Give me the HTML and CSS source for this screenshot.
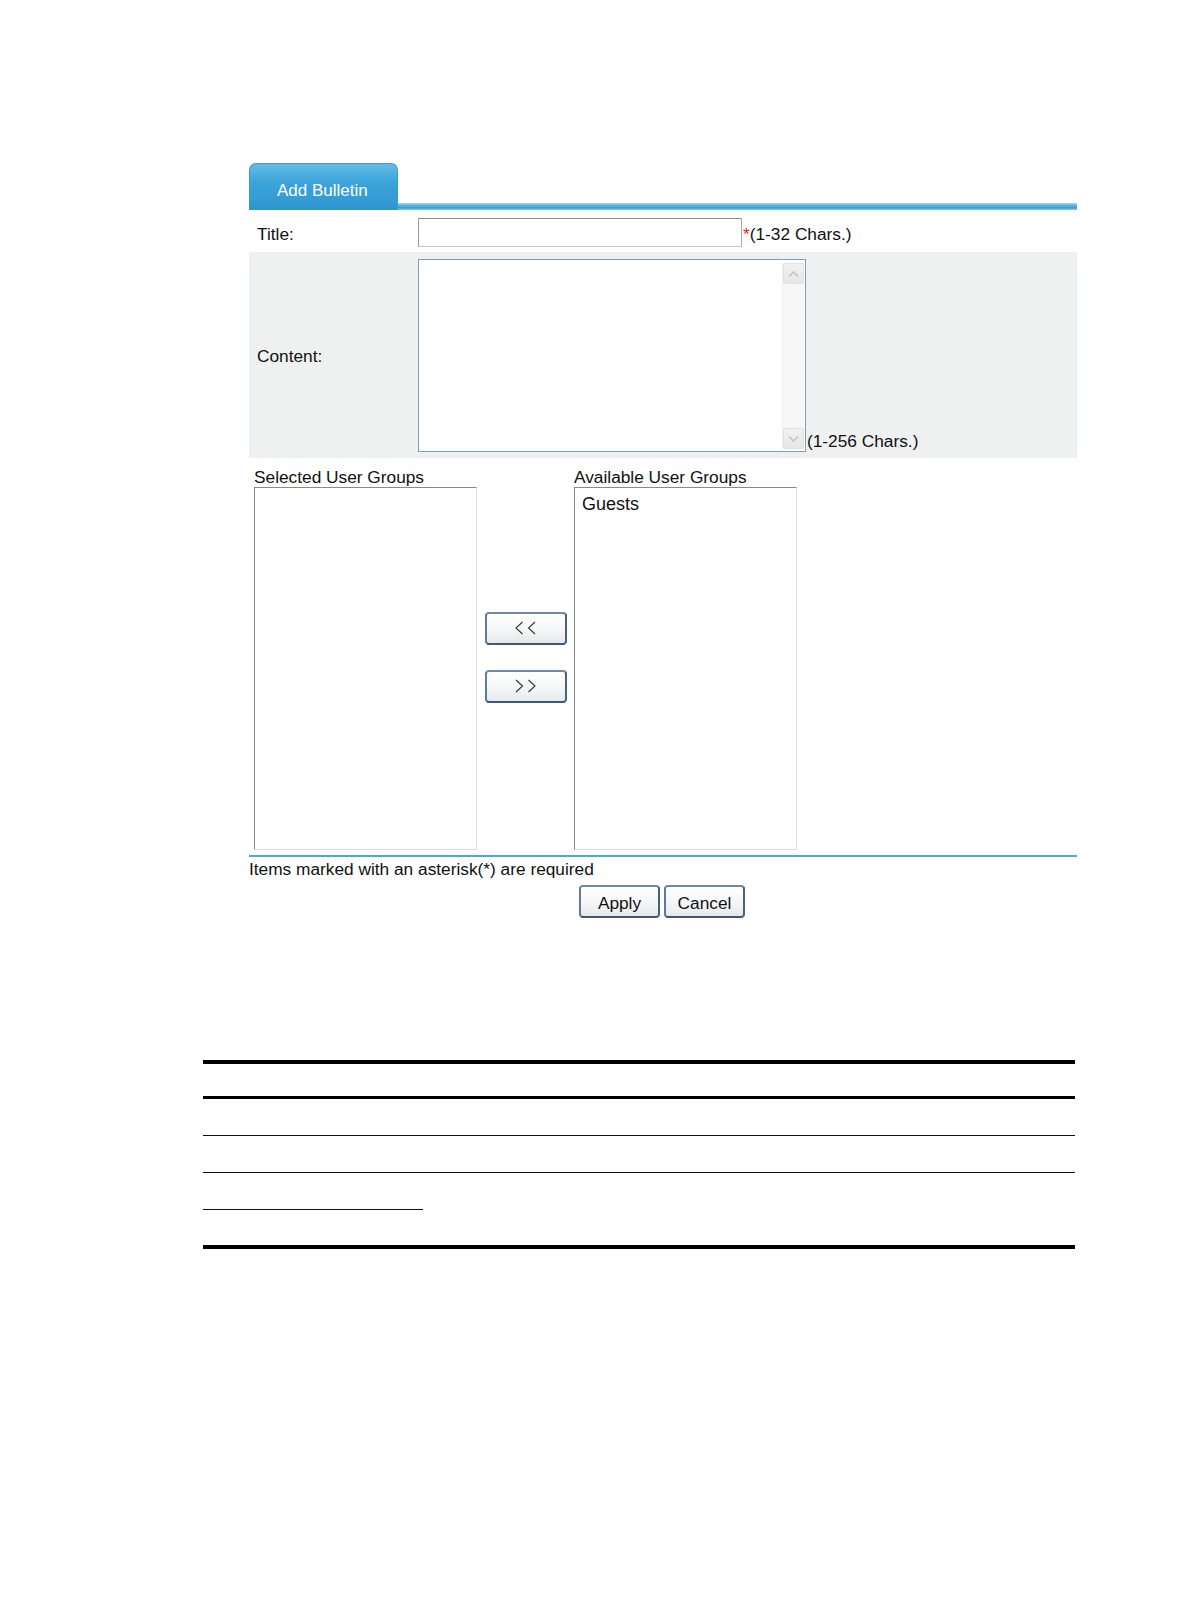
FILE: index.html
```html
<!DOCTYPE html>
<html>
<head>
<meta charset="utf-8">
<title>Add Bulletin</title>
<link rel="stylesheet" href="styles.css">
</head>
<body>
<div class="page">
  <div class="form">
    <div class="tabrow">
      <div class="tab">Add Bulletin</div>
      <div class="tabline"></div>
    </div>
    <div class="row row-title">
      <div class="label">Title:</div>
      <div class="input"></div>
      <span class="req">*</span><span class="note">(1-32 Chars.)</span>
    </div>
    <div class="row row-content">
      <div class="label">Content:</div>
      <div class="textbox">
        <div class="scrollbar">
          <div class="sb-btn">
            <svg width="13" height="8" viewBox="0 0 13 8"><polyline points="2,6.5 6.5,2 11,6.5" fill="none" stroke="#c4c4c4" stroke-width="1.6"/></svg>
          </div>
          <div class="sb-track"></div>
          <div class="sb-btn">
            <svg width="13" height="8" viewBox="0 0 13 8"><polyline points="2,1.5 6.5,6 11,1.5" fill="none" stroke="#c4c4c4" stroke-width="1.6"/></svg>
          </div>
        </div>
      </div>
      <span class="note note-bottom">(1-256 Chars.)</span>
    </div>
    <div class="groups">
      <div class="col">
        <div class="glabel">Selected User Groups</div>
        <div class="listbox"></div>
      </div>
      <div class="movers">
        <button class="btn mover" type="button">
          <svg width="22" height="14" viewBox="0 0 22 14"><polyline points="7.5,1 1,7 7.5,13" fill="none" stroke="#333" stroke-width="1.1"/><polyline points="20,1 13.5,7 20,13" fill="none" stroke="#333" stroke-width="1.1"/></svg>
        </button>
        <button class="btn mover" type="button">
          <svg width="22" height="14" viewBox="0 0 22 14"><polyline points="1,1 7.5,7 1,13" fill="none" stroke="#333" stroke-width="1.1"/><polyline points="13.5,1 20,7 13.5,13" fill="none" stroke="#333" stroke-width="1.1"/></svg>
        </button>
      </div>
      <div class="col">
        <div class="glabel">Available User Groups</div>
        <div class="listbox">
          <div class="option">Guests</div>
        </div>
      </div>
    </div>
    <div class="footer">
      <div class="hint">Items marked with an asterisk(*) are required</div>
      <div class="actions">
        <button class="btn action" type="button">Apply</button>
        <button class="btn action" type="button">Cancel</button>
      </div>
    </div>
  </div>

  <div class="rules">
    <div class="rule thick"></div>
    <div class="gap g32"></div>
    <div class="rule medium"></div>
    <div class="gap g36"></div>
    <div class="rule thin"></div>
    <div class="gap g36"></div>
    <div class="rule thin"></div>
    <div class="gap g36"></div>
    <div class="rule thin short"></div>
    <div class="gap g35"></div>
    <div class="rule thick"></div>
  </div>
</div>
</body>
</html>
```

FILE: styles.css
```css
html, body {
  margin: 0;
  padding: 0;
  background: #ffffff;
}

body {
  font-family: "Liberation Sans", Arial, sans-serif;
  font-size: 17.3px;
  color: #111;
}

.page {
  padding-top: 163px;
  width: 1190px;
  height: 1616px;
  box-sizing: border-box;
}

.form {
  margin-left: 249px;
  width: 828px;
}

/* tab header */
.tabrow {
  display: flex;
  align-items: flex-end;
  height: 47px;
}

.tab {
  width: 149px;
  height: 47px;
  box-sizing: border-box;
  padding: 8px 0 0 27px;
  display: flex;
  align-items: center;
  border-radius: 7px 7px 0 0;
  background: linear-gradient(#62bce6 0%, #3ca4da 40%, #2f95cf 100%);
  border: 1px solid #3a9bd2;
  border-bottom: none;
  color: #ffffff;
  font-size: 17px;
  line-height: 20px;
}

.tabline {
  flex: 1;
  height: 7px;
  background: linear-gradient(#a9d8f1 0%, #5cb3e2 35%, #3a9fd8 70%, #8fcaea 100%);
}

/* rows */
.row {
  display: flex;
  align-items: center;
}

.label {
  width: 169px;
  box-sizing: border-box;
  padding-left: 8px;
  line-height: 20px;
  flex-shrink: 0;
}

.row-title {
  height: 42px;
}

.row-title .label {
  margin-top: 5px;
}

.input {
  width: 324px;
  height: 29px;
  box-sizing: border-box;
  border: 1px solid #a9a9a9;
  border-top-color: #8e8e8e;
  border-left-color: #9a9a9a;
  border-bottom-color: #c9c9c9;
  background: #fff;
  margin-top: 3px;
}

.req {
  color: #e0202a;
  line-height: 20px;
  margin-left: 1px;
  margin-top: 6px;
}

.note {
  line-height: 20px;
  margin-top: 6px;
}

.row-content {
  height: 206px;
  background: #eff0f0;
  align-items: flex-start;
}

.row-content .label {
  align-self: center;
  margin-top: 2px;
}

.textbox {
  margin-top: 7px;
  width: 388px;
  height: 193px;
  box-sizing: border-box;
  border: 1px solid #7f9db9;
  background: #fff;
  display: flex;
  justify-content: flex-end;
  padding: 3px 1px 2px 0;
}

.scrollbar {
  width: 21px;
  display: flex;
  flex-direction: column;
  background: #f7f7f7;
  border-left: 1px solid #efefef;
}

.sb-btn {
  height: 19px;
  display: flex;
  align-items: center;
  justify-content: center;
  background: linear-gradient(#f2f2f2, #e6e6e6);
  border: 1px solid #e2e2e2;
  border-radius: 2px;
}

.sb-track {
  flex: 1;
}

.note-bottom {
  align-self: flex-end;
  margin: 0 0 7px 1px;
}

/* group selectors */
.groups {
  display: flex;
  padding: 9px 0 5px 5px;
}

.col {
  width: 223px;
  display: flex;
  flex-direction: column;
}

.glabel {
  line-height: 20px;
  height: 20px;
}

.listbox {
  height: 363px;
  box-sizing: border-box;
  border: 1px solid #dedede;
  border-top-color: #8a8a8a;
  border-left-color: #8a8a8a;
  background: #fff;
  padding: 5px 0 0 7px;
}

.option {
  font-size: 18px;
  line-height: 22px;
}

.movers {
  width: 97px;
  box-sizing: border-box;
  padding: 145px 0 0 8px;
  display: flex;
  flex-direction: column;
  gap: 25px;
}

.btn {
  font-family: "Liberation Sans", Arial, sans-serif;
  font-size: 17.3px;
  color: #111;
  background: linear-gradient(#ffffff 0%, #f6f7f8 50%, #e6e9ec 100%);
  border: 2px solid #4f6f8f;
  border-color: #6f8aa6 #45627f #3e5974 #5f7b98;
  border-radius: 4px;
  padding: 0;
  margin: 0;
  box-sizing: border-box;
  display: flex;
  align-items: center;
  justify-content: center;
}

.mover {
  width: 82px;
  height: 33px;
  padding-bottom: 1px;
}

/* footer */
.footer {
  border-top: 2px solid #45ace3;
}

.hint {
  line-height: 20px;
  height: 20px;
  margin-top: 2px;
}

.actions {
  display: flex;
  justify-content: center;
  gap: 4px;
  margin-top: 6px;
  padding-right: 2px;
}

.action {
  width: 81px;
  height: 33px;
  padding-top: 4px;
}

/* document rules below */
.rules {
  margin-left: 203px;
  margin-top: 142px;
  width: 872px;
}

.rule {
  background: #000;
}

.rule.thick {
  height: 4px;
}

.rule.medium {
  height: 3px;
}

.rule.thin {
  height: 1px;
  background: #111;
}

.rule.short {
  width: 220px;
}

.gap.g32 { height: 32px; }
.gap.g35 { height: 35px; }
.gap.g36 { height: 36px; }
```
